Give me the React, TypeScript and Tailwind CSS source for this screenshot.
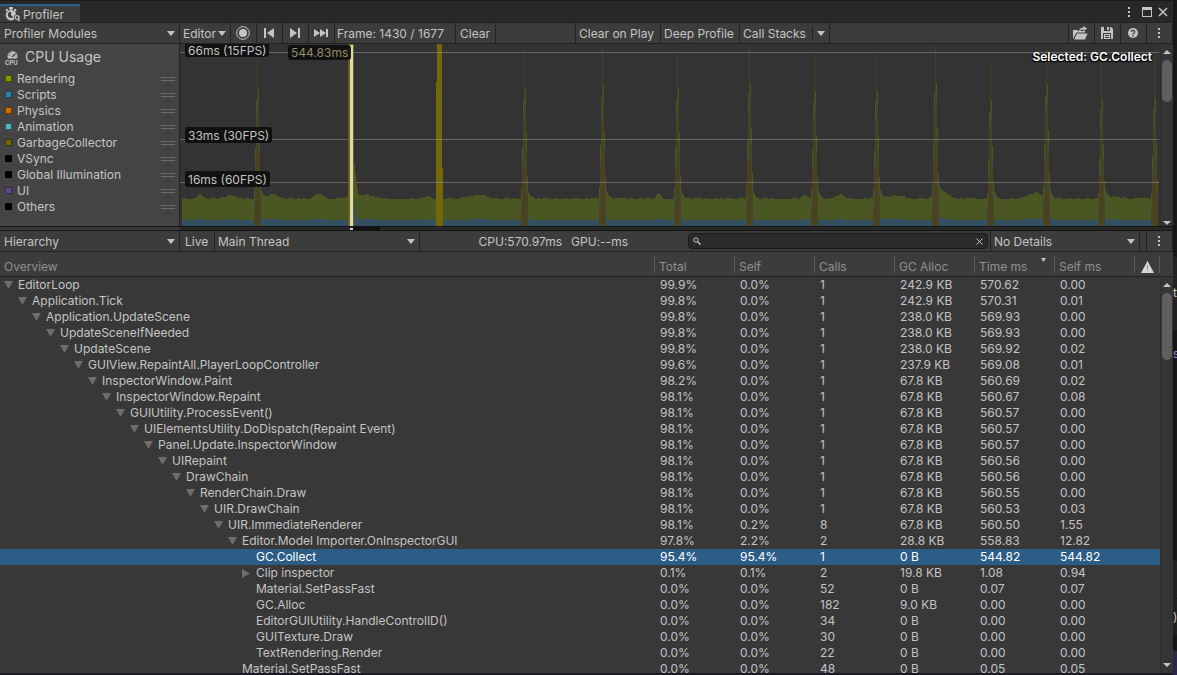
import { useState } from "react"
import type { ReactNode } from "react"

type Row = {
  name: string
  depth: number
  fold?: "open" | "closed"
  cells: string[]
}

const ROWS: Row[] = [
  { name: "EditorLoop", depth: 0, fold: "open", cells: ["99.9%", "0.0%", "1", "242.9 KB", "570.62", "0.00"] },
  { name: "Application.Tick", depth: 1, fold: "open", cells: ["99.8%", "0.0%", "1", "242.9 KB", "570.31", "0.01"] },
  { name: "Application.UpdateScene", depth: 2, fold: "open", cells: ["99.8%", "0.0%", "1", "238.0 KB", "569.93", "0.00"] },
  { name: "UpdateSceneIfNeeded", depth: 3, fold: "open", cells: ["99.8%", "0.0%", "1", "238.0 KB", "569.93", "0.00"] },
  { name: "UpdateScene", depth: 4, fold: "open", cells: ["99.8%", "0.0%", "1", "238.0 KB", "569.92", "0.02"] },
  { name: "GUIView.RepaintAll.PlayerLoopController", depth: 5, fold: "open", cells: ["99.6%", "0.0%", "1", "237.9 KB", "569.08", "0.01"] },
  { name: "InspectorWindow.Paint", depth: 6, fold: "open", cells: ["98.2%", "0.0%", "1", "67.8 KB", "560.69", "0.02"] },
  { name: "InspectorWindow.Repaint", depth: 7, fold: "open", cells: ["98.1%", "0.0%", "1", "67.8 KB", "560.67", "0.08"] },
  { name: "GUIUtility.ProcessEvent()", depth: 8, fold: "open", cells: ["98.1%", "0.0%", "1", "67.8 KB", "560.57", "0.00"] },
  { name: "UIElementsUtility.DoDispatch(Repaint Event)", depth: 9, fold: "open", cells: ["98.1%", "0.0%", "1", "67.8 KB", "560.57", "0.00"] },
  { name: "Panel.Update.InspectorWindow", depth: 10, fold: "open", cells: ["98.1%", "0.0%", "1", "67.8 KB", "560.57", "0.00"] },
  { name: "UIRepaint", depth: 11, fold: "open", cells: ["98.1%", "0.0%", "1", "67.8 KB", "560.56", "0.00"] },
  { name: "DrawChain", depth: 12, fold: "open", cells: ["98.1%", "0.0%", "1", "67.8 KB", "560.56", "0.00"] },
  { name: "RenderChain.Draw", depth: 13, fold: "open", cells: ["98.1%", "0.0%", "1", "67.8 KB", "560.55", "0.00"] },
  { name: "UIR.DrawChain", depth: 14, fold: "open", cells: ["98.1%", "0.0%", "1", "67.8 KB", "560.53", "0.03"] },
  { name: "UIR.ImmediateRenderer", depth: 15, fold: "open", cells: ["98.1%", "0.2%", "8", "67.8 KB", "560.50", "1.55"] },
  { name: "Editor.Model Importer.OnInspectorGUI", depth: 16, fold: "open", cells: ["97.8%", "2.2%", "2", "28.8 KB", "558.83", "12.82"] },
  { name: "GC.Collect", depth: 17, cells: ["95.4%", "95.4%", "1", "0 B", "544.82", "544.82"] },
  { name: "Clip inspector", depth: 17, fold: "closed", cells: ["0.1%", "0.1%", "2", "19.8 KB", "1.08", "0.94"] },
  { name: "Material.SetPassFast", depth: 17, cells: ["0.0%", "0.0%", "52", "0 B", "0.07", "0.07"] },
  { name: "GC.Alloc", depth: 17, cells: ["0.0%", "0.0%", "182", "9.0 KB", "0.00", "0.00"] },
  { name: "EditorGUIUtility.HandleControlID()", depth: 17, cells: ["0.0%", "0.0%", "34", "0 B", "0.00", "0.00"] },
  { name: "GUITexture.Draw", depth: 17, cells: ["0.0%", "0.0%", "30", "0 B", "0.00", "0.00"] },
  { name: "TextRendering.Render", depth: 17, cells: ["0.0%", "0.0%", "22", "0 B", "0.00", "0.00"] },
  { name: "Material.SetPassFast", depth: 16, cells: ["0.0%", "0.0%", "48", "0 B", "0.05", "0.05"] },
]

const COLUMNS = ["Total", "Self", "Calls", "GC Alloc", "Time ms", "Self ms"]

const CATEGORIES = [
  { name: "Rendering", swatch: "bg-[#7f9f00]" },
  { name: "Scripts", swatch: "bg-[#2f86a6]" },
  { name: "Physics", swatch: "bg-[#d66b00]" },
  { name: "Animation", swatch: "bg-[#55b3bd]" },
  { name: "GarbageCollector", swatch: "bg-[#736806]" },
  { name: "VSync", swatch: "bg-black" },
  { name: "Global Illumination", swatch: "bg-black" },
  { name: "UI", swatch: "bg-[#644a8c]" },
  { name: "Others", swatch: "bg-black" },
]

// Chart space is 980 x 182, origin at the top left of the graph area
const CHART_W = 980
const CHART_H = 182

const SPIKES = [
  { x: 77, top: 8 },
  { x: 344, top: 8 },
  { x: 422, top: 5 },
  { x: 497, top: 7 },
  { x: 569, top: 2 },
  { x: 634, top: 10 },
  { x: 696, top: 10 },
  { x: 755, top: 2 },
  { x: 810, top: 20 },
  { x: 866, top: 4 },
  { x: 921, top: 18 },
  { x: 974, top: 17 },
]

const BUMPS = [
  { x: 20, h: 4, w: 3 },
  { x: 50, h: 3, w: 5 },
  { x: 92, h: 4, w: 6 },
  { x: 139, h: 5, w: 4 },
  { x: 182, h: 4, w: 12 },
  { x: 247, h: 3, w: 3 },
  { x: 298, h: 4, w: 8 },
  { x: 478, h: 6, w: 2 },
  { x: 625, h: 3, w: 3 },
  { x: 660, h: 4, w: 4 },
  { x: 715, h: 3, w: 8 },
  { x: 762, h: 6, w: 6 },
  { x: 850, h: 4, w: 6 },
  { x: 858, h: 4, w: 4 },
  { x: 935, h: 2, w: 6 },
]

const noise = (x: number) => {
  const n = Math.sin(Math.floor(x / 3) * 12.9898) * 43758.5453
  return n - Math.floor(n)
}

function areaPath(base: number, scale: number, jitter: number) {
  let d = `M2 ${CHART_H}`
  for (let x = 2; x < 972; x++) {
    let h = noise(x) > 0.6 ? jitter : 0
    for (const b of BUMPS) h += scale * b.h * Math.exp(-((x - b.x) ** 2) / (2 * b.w * b.w))
    for (const s of SPIKES) if (x > s.x + 3) h += scale * 14 * Math.exp(-(x - s.x - 3) / 2)
    d += `V${Math.round(base - h)}H${x + 1}`
  }
  return `${d}V${CHART_H}Z`
}

const GREEN_AREA = areaPath(155, 1, 1)
const BLUE_AREA = areaPath(176, 0.25, 0)

function Spike({ x, top }: { x: number; top: number }) {
  const steps = [
    { dx: 1, y: top + 37 },
    { dx: -1, y: top + 48 },
    { dx: 2, y: top + 82 },
    { dx: -2, y: top + 96 },
    { dx: 3, y: Math.max(124, 128 + top / 2) },
    { dx: -3, y: Math.max(136, 140 + top / 2) },
  ]
  return (
    <g>
      <rect x={x} y={top} width={1} height={CHART_H - top} fill="#46421f" />
      {steps.map((s) => (
        <g key={s.dx}>
          <rect x={x + s.dx} y={s.y} width={1} height={CHART_H - s.y} fill="#494324" />
          <rect x={x + s.dx} y={s.y} width={1} height={14} fill="#4b5722" />
          <rect x={x + s.dx} y={s.y + 14} width={1} height={4} fill="#325060" />
        </g>
      ))}
    </g>
  )
}

function CpuChart() {
  return (
    <svg
      viewBox={`0 0 ${CHART_W} ${CHART_H}`}
      preserveAspectRatio="none"
      shapeRendering="crispEdges"
      className="absolute inset-0 w-full h-full"
      aria-label="CPU usage chart"
    >
      <path d={GREEN_AREA} fill="#4b5722" />
      <path d={BLUE_AREA} fill="#325060" />
      {SPIKES.map((s) => (
        <Spike key={s.x} x={s.x} top={s.top} />
      ))}
      {/* Long frame next to the selected one */}
      <rect x={257} y={0} width={5} height={CHART_H} fill="#736709" />
      <rect x={256} y={38} width={1} height={144} fill="#736709" />
      <rect x={262} y={124} width={1} height={58} fill="#6b660c" />
      <rect x={258} y={44} width={1} height={8} fill="#6b7a0a" />
      <rect x={260} y={48} width={1} height={10} fill="#5f7019" />
      {[8, 95, 138].map((y) => (
        <rect key={y} x={0} y={y} width={CHART_W - 1} height={1} fill="#9a9a9a" opacity={0.5} />
      ))}
      {/* Selected frame */}
      <path d="M174 120v56h6V154h-1v-4h-1v-5h-1v-6h-1v-9h-1v-10z" fill="#4b5722" />
      <path d="M174 158v24h4v-7h-1v-5h-1v-6h-1v-6z" fill="#325060" />
      <rect x={168} y={0} width={6} height={CHART_H} fill="#6f6409" />
      <rect x={170} y={1} width={3} height={181} fill="#dad9bd" />
    </svg>
  )
}

function Caret({ className = "" }: { className?: string }) {
  return (
    <svg width="8" height="5" viewBox="0 0 8 5" className={`shrink-0 pointer-events-none ${className}`}>
      <path d="M0 0h8L4 5z" fill="#c4c4c4" />
    </svg>
  )
}

function Kebab() {
  return (
    <svg width="4" height="12" viewBox="0 0 4 12" fill="#c4c4c4">
      <rect x="1" y="1" width="2" height="2" />
      <rect x="1" y="5" width="2" height="2" />
      <rect x="1" y="9" width="2" height="2" />
    </svg>
  )
}

function Dropdown({ label, value, className }: { label: string; value: string; className: string }) {
  return (
    <div className={`flex items-center border-r border-[#232323] ${className}`}>
      <select
        aria-label={label}
        className="appearance-none bg-transparent flex-1 min-w-0 h-full pt-[2px] outline-none text-[#c4c4c4]"
      >
        <option>{value}</option>
      </select>
      <Caret />
    </div>
  )
}

function IconButton({ label, children }: { label: string; children: ReactNode }) {
  return (
    <button
      aria-label={label}
      className="w-[26px] shrink-0 flex items-center justify-center pr-[2px] border-r border-[#232323] hover:bg-[#464646]"
    >
      {children}
    </button>
  )
}

function TextButton({ className, children }: { className: string; children: ReactNode }) {
  return (
    <button className={`shrink-0 pt-[2px] text-left border-r border-[#232323] hover:bg-[#464646] ${className}`}>
      {children}
    </button>
  )
}

function ScrollBar({ className, thumb }: { className: string; thumb: string }) {
  return (
    <div
      className={`w-[13px] shrink-0 bg-[#353535] border-l border-[#2e2e2e] flex flex-col items-center pt-[6px] ${className}`}
    >
      <svg width="8" height="4" viewBox="0 0 8 4">
        <path d="M0 4h8L4 0z" fill="#c4c4c4" />
      </svg>
      <div className={`w-[10px] mt-[6px] rounded-full bg-[#5f5f5f] ${thumb}`} />
      <svg width="8" height="4" viewBox="0 0 8 4" className="mt-auto">
        <path d="M0 0h8L4 4z" fill="#c4c4c4" />
      </svg>
    </div>
  )
}

function ProfilerIcon() {
  return (
    <svg width="15" height="15" viewBox="0 0 15 15" fill="#c4c4c4">
      <path d="M4 0h4v2H7v1.500H5V2H4z" />
      <path d="M.3 3.300 2 1.600l1.400 1.400L1.700 4.700zM8.600 3 10 1.600l1.700 1.700L10.300 4.700z" />
      <path
        fillRule="evenodd"
        d="M6 3a5.200 5.200 0 1 0 3.500 9L9 10.500V9l2-2A5.200 5.200 0 0 0 6 3zM6 4.500V8l2.300 2.300A3.300 3.300 0 1 1 6 4.500z"
      />
      <circle cx="12" cy="10.500" r="1.800" fill="none" stroke="#c4c4c4" strokeWidth="1.200" />
      <path d="M13.200 9v5.500h1.300V9z" />
    </svg>
  )
}

function CpuIcon() {
  return (
    <svg width="15" height="15" viewBox="0 0 15 15">
      <path d="M3 8.500A5 5 0 1 1 12 8.500z" fill="#c4c4c4" />
      <path d="M7 7l3.500-3.500" stroke="#444" strokeWidth="1.500" />
      <path d="M3.500 5h1.500M5.500 2.500l.7 1M11.500 6h-1" stroke="#444" />
      <text x="0" y="15" fontSize="6" fontWeight="700" fill="#c4c4c4" fontFamily="Inter, sans-serif">
        CPU
      </text>
    </svg>
  )
}

function ModulePanel() {
  return (
    <div className="w-[180px] shrink-0 bg-[#444444] border-r border-[#232323] pb-[11px]">
      <div className="h-[27px] flex items-center gap-[5px] pl-[5px] pb-px text-[14px]">
        <CpuIcon />
        CPU Usage
      </div>
      <ul>
        {CATEGORIES.map((c) => (
          <li key={c.name} className="h-4 flex items-center pl-[5px] pr-1">
            <span className={`size-[7px] border border-black/50 mr-[5px] mb-px ${c.swatch}`} />
            {c.name}
            <span className="ml-auto w-[14px] h-1 border-y border-[#6c6c6c]" />
          </li>
        ))}
      </ul>
    </div>
  )
}

function ChartLabel({ className, children }: { className: string; children: ReactNode }) {
  return <span className={`absolute px-[3px] rounded-[3px] bg-[#0d0d0d]/90 ${className}`}>{children}</span>
}

function TopToolbar() {
  return (
    <div className="h-[21px] shrink-0 flex bg-[#3c3c3c] border-b border-[#232323]">
      <Dropdown label="Profiler modules" value="Profiler Modules" className="w-[180px] shrink-0 pl-1 pr-1" />
      <Dropdown label="Target" value="Editor" className="w-[51px] shrink-0 pl-[3px] pr-1" />
      <IconButton label="Record">
        <svg width="14" height="14" viewBox="0 0 14 14">
          <circle cx="7" cy="7" r="6.300" fill="none" stroke="#c4c4c4" />
          <circle cx="7" cy="7" r="4" fill="#c4c4c4" />
        </svg>
      </IconButton>
      <IconButton label="Previous frame">
        <svg width="12" height="10" viewBox="0 0 12 10" fill="#c4c4c4">
          <path d="M1 0h2v10H1zM11 0v10L4 5z" />
        </svg>
      </IconButton>
      <IconButton label="Next frame">
        <svg width="12" height="10" viewBox="0 0 12 10" fill="#c4c4c4">
          <path d="M9 0h2v10H9zM1 0v10l7-5z" />
        </svg>
      </IconButton>
      <IconButton label="Current frame">
        <svg width="16" height="8" viewBox="0 0 16 8" fill="#c4c4c4">
          <path d="M1 0v8l6-4zM7 0v8l6-4zM13 0h2v8h-2z" />
        </svg>
      </IconButton>
      <div className="w-[121px] shrink-0 pl-[2px] pt-[3px] border-r border-[#232323]">Frame: 1430 / 1677</div>
      <TextButton className="w-10 pl-1">Clear</TextButton>
      <div className="w-20 shrink-0 border-r border-[#232323]" />
      <TextButton className="w-[85px] pl-[3px]">Clear on Play</TextButton>
      <TextButton className="w-[79px] pl-[3px]">Deep Profile</TextButton>
      <div className="w-[90px] shrink-0 flex items-center border-r border-[#232323]">
        <button className="w-[72px] h-full pt-[2px] pl-[3px] text-left">Call Stacks</button>
        <button
          aria-label="Call stack options"
          className="flex-1 h-3 flex items-center justify-center border-l border-[#232323]"
        >
          <Caret />
        </button>
      </div>
      <div className="flex-1 border-r border-[#232323]" />
      <IconButton label="Load">
        <svg width="15" height="14" viewBox="0 0 15 14" fill="#c4c4c4">
          <path d="M0 13V4h4l1 1h1c.5-2.500 2.500-3.500 4.500-3.500V0L14 2.500l-3.500 2.500V3.500C8.500 3.500 7.500 4 7.200 5H12v1.500H3.500z" />
          <path d="M4 7.500h10.500L12 13.500H1.200z" />
        </svg>
      </IconButton>
      <IconButton label="Save">
        <svg width="12" height="12" viewBox="0 0 12 12">
          <path d="M0 0h10l2 2v10H0z" fill="#c4c4c4" />
          <path d="M2 0h1v4h6V0h-1v3H6V0zM2 6h8v6H9V7H3v5H2z" fill="#3c3c3c" />
          <path d="M4 8h4v1H4zM4 10h4v1H4z" fill="#3c3c3c" />
        </svg>
      </IconButton>
      <IconButton label="Help">
        <svg width="10" height="10" viewBox="0 0 10 10">
          <circle cx="5" cy="5" r="5" fill="#c4c4c4" />
          <path d="M3.400 4a1.600 1.600 0 1 1 2.400 1.300Q5 5.700 5 6.500" fill="none" stroke="#3c3c3c" strokeWidth="1.300" />
          <rect x="4.300" y="7.200" width="1.400" height="1.300" fill="#3c3c3c" />
        </svg>
      </IconButton>
      <IconButton label="More options">
        <Kebab />
      </IconButton>
    </div>
  )
}

function DetailToolbar() {
  const [query, setQuery] = useState("")
  return (
    <div className="h-[21px] shrink-0 flex bg-[#3c3c3c] border-b border-[#232323]">
      <Dropdown label="View" value="Hierarchy" className="w-[180px] shrink-0 pl-1 pr-1" />
      <TextButton className="w-[35px] pl-[5px]">Live</TextButton>
      <Dropdown label="Thread" value="Main Thread" className="w-[205px] shrink-0 pl-[3px] pr-1" />
      <div className="flex-1 flex justify-end gap-[9px] pt-[3px] pr-[60px] whitespace-nowrap">
        <span>CPU:570.97ms</span>
        <span>GPU:--ms</span>
      </div>
      <div className="w-[300px] shrink-0 my-[2px] mr-[2px] flex items-center rounded-[4px] border border-[#1a1a1a] bg-[#2a2a2a] px-1">
        <svg width="8" height="8" viewBox="0 0 8 8" fill="none" stroke="#c4c4c4">
          <circle cx="3" cy="3" r="2.200" />
          <path d="M4.700 4.700 7.500 7.500" strokeWidth="1.400" />
        </svg>
        <input
          aria-label="Search"
          value={query}
          onChange={(e) => setQuery(e.target.value)}
          className="flex-1 min-w-0 h-full px-1 bg-transparent outline-none"
        />
        <button aria-label="Clear search" onClick={() => setQuery("")}>
          <svg width="7" height="7" viewBox="0 0 7 7" stroke="#c4c4c4">
            <path d="M.5.5l6 6M6.500.5l-6 6" />
          </svg>
        </button>
      </div>
      <Dropdown label="Details" value="No Details" className="w-[150px] shrink-0 pl-[3px] pr-1 border-l" />
      <div className="w-[7px] shrink-0 border-r border-[#232323]" />
      <IconButton label="View options">
        <Kebab />
      </IconButton>
    </div>
  )
}

function HierarchyTable() {
  const [selected, setSelected] = useState(17)
  return (
    <div className="flex-1 min-h-0 flex overflow-hidden bg-[#383838]">
      <div className="flex-1 min-w-0 overflow-hidden">
        <table className="w-full table-fixed border-separate border-spacing-0">
          <colgroup>
            <col />
            {COLUMNS.map((c) => (
              <col key={c} className="w-20" />
            ))}
            <col className="w-[26px]" />
          </colgroup>
          <thead className="bg-[#3c3c3c] text-[#8f8f8f]">
            <tr>
              <th className="h-[25px] p-0 pl-1 pt-[6px] text-left font-normal border-b border-[#232323]">Overview</th>
              {COLUMNS.map((c) => (
                <th key={c} className="p-0 font-normal text-left border-b border-[#232323]">
                  <div className="h-[17px] border-l border-[#585858] pl-1 pt-[6px] flex items-center relative">
                    {c}
                    {c === "Time ms" && (
                      <svg width="5" height="4" viewBox="0 0 5 4" className="absolute right-2 top-[2px]">
                        <path d="M0 0h5L2.500 4z" fill="#c4c4c4" />
                      </svg>
                    )}
                  </div>
                </th>
              ))}
              <th className="p-0 border-b border-[#232323]" aria-label="Warnings">
                <div className="h-[17px] border-x border-[#585858] flex items-center justify-center pt-[6px]">
                  <svg width="13" height="12" viewBox="0 0 13 12">
                    <path d="M6.500 0 13 12H0z" fill="#d8d8d8" />
                    <path d="M6 4h1v4H6zM6 9h1v1H6z" fill="#8a8a8a" />
                  </svg>
                </div>
              </th>
            </tr>
          </thead>
          <tbody>
            {ROWS.map((row, i) => (
              <tr
                key={i}
                onClick={() => setSelected(i)}
                className={`h-4 ${i === selected ? "bg-[#2c5d87] text-white" : ""}`}
              >
                <td className="p-0">
                  <div className="h-4 flex items-center whitespace-nowrap" style={{ paddingLeft: 4 + row.depth * 14 }}>
                    <span className="w-[14px] shrink-0">
                      {row.fold === "open" && (
                        <svg width="9" height="8" viewBox="0 0 9 8">
                          <path d="M0 0h9L4.500 8z" fill="#6e6e6e" />
                        </svg>
                      )}
                      {row.fold === "closed" && (
                        <svg width="8" height="9" viewBox="0 0 8 9">
                          <path d="M0 0v9l8-4.500z" fill="#6e6e6e" />
                        </svg>
                      )}
                    </span>
                    {row.name}
                  </div>
                </td>
                {row.cells.map((cell, j) => (
                  <td key={j} className="p-0 pl-[6px]">
                    {cell}
                  </td>
                ))}
                <td className="p-0" />
              </tr>
            ))}
          </tbody>
        </table>
      </div>
      <div className="shrink-0 flex flex-col">
        <div className="h-[25px] shrink-0 bg-[#3c3c3c] border-b border-[#232323]" />
        <div className="flex-1 flex">
          <ScrollBar className="pb-[6px]" thumb="h-[67px]" />
        </div>
      </div>
    </div>
  )
}

// Sliver of the windows that sit behind the profiler
function DesktopEdge() {
  return (
    <div className="w-1 shrink-0 flex flex-col overflow-hidden bg-[#171717]">
      <div className="h-[257px] shrink-0" />
      <div className="h-[73px] shrink-0 bg-[#222222] pt-7">t</div>
      <div className="h-[231px] shrink-0 pt-4 text-[#8d86c9]">s</div>
      <div className="h-[37px] shrink-0 bg-[#222222]" />
      <div className="h-[37px] shrink-0 bg-[#222222] border-t border-[#141414] pt-[10px]">)</div>
      <div className="h-4 shrink-0" />
      <div className="flex-1 bg-[#2c2946]" />
    </div>
  )
}

export default function App() {
  return (
    <div className="h-screen flex bg-[#1d1b26] overflow-hidden font-['Inter',sans-serif] text-[12px] leading-4 text-[#c4c4c4] select-none">
      <div className="flex-1 min-w-0 flex flex-col pb-[2px]">
        {/* Tab bar */}
        <header className="h-[23px] shrink-0 flex items-end bg-[#282828] border-t border-[#191919] border-b border-b-[#232323]">
          <button className="w-20 h-[18px] flex items-center gap-[3px] pl-[5px] pt-px bg-[#3c3c3c] border-t-2 border-[#2c5d87]">
            <ProfilerIcon />
            Profiler
          </button>
          <div className="ml-auto h-full flex items-center gap-[6px] pr-[5px]">
            <button aria-label="Window menu" className="pl-1 pr-[5px]">
              <Kebab />
            </button>
            <button aria-label="Maximize">
              <svg width="10" height="10" viewBox="0 0 10 10">
                <path d="M0 0h10v10H0zM1 3v6h8V3z" fillRule="evenodd" fill="#c4c4c4" />
              </svg>
            </button>
            <button aria-label="Close">
              <svg width="10" height="10" viewBox="0 0 10 10" stroke="#c4c4c4" strokeWidth="1.500">
                <path d="M1 1l8 8M9 1l-8 8" />
              </svg>
            </button>
          </div>
        </header>

        <TopToolbar />

        {/* Modules and chart */}
        <div className="shrink-0 flex">
          <ModulePanel />
          <div className="relative flex-1 min-w-0 overflow-hidden bg-[#333333]">
            <CpuChart />
            <ChartLabel className="left-[5px] top-0 h-[13px] leading-[13px] rounded-t-none">66ms (15FPS)</ChartLabel>
            <ChartLabel className="left-[5px] top-[83px] h-4 leading-[18px]">33ms (30FPS)</ChartLabel>
            <ChartLabel className="left-[5px] top-[127px] h-4 leading-[18px]">16ms (60FPS)</ChartLabel>
            <ChartLabel className="left-[108px] top-[1px] h-[15px] leading-4 text-[#918e68]">544.83ms</ChartLabel>
            <span className="absolute right-2 top-[5px] font-semibold text-white [text-shadow:1px_1px_1px_#000,-1px_1px_1px_#000]">
              Selected: GC.Collect
            </span>
          </div>
          <ScrollBar className="pb-px" thumb="h-[42px]" />
        </div>

        {/* Frame marker strip */}
        <div className="h-[5px] shrink-0 flex border-y border-[#151515] bg-[#282828]">
          <div className="w-[180px] shrink-0 bg-[#383838]" />
          <div className="w-[170px] shrink-0" />
          <div className="w-[3px] h-[2px] mt-px shrink-0 bg-[#d0d0d0]" />
          <div className="w-[27px] shrink-0 bg-[#101010]" />
        </div>

        <DetailToolbar />
        <HierarchyTable />
      </div>
      <DesktopEdge />
    </div>
  )
}
